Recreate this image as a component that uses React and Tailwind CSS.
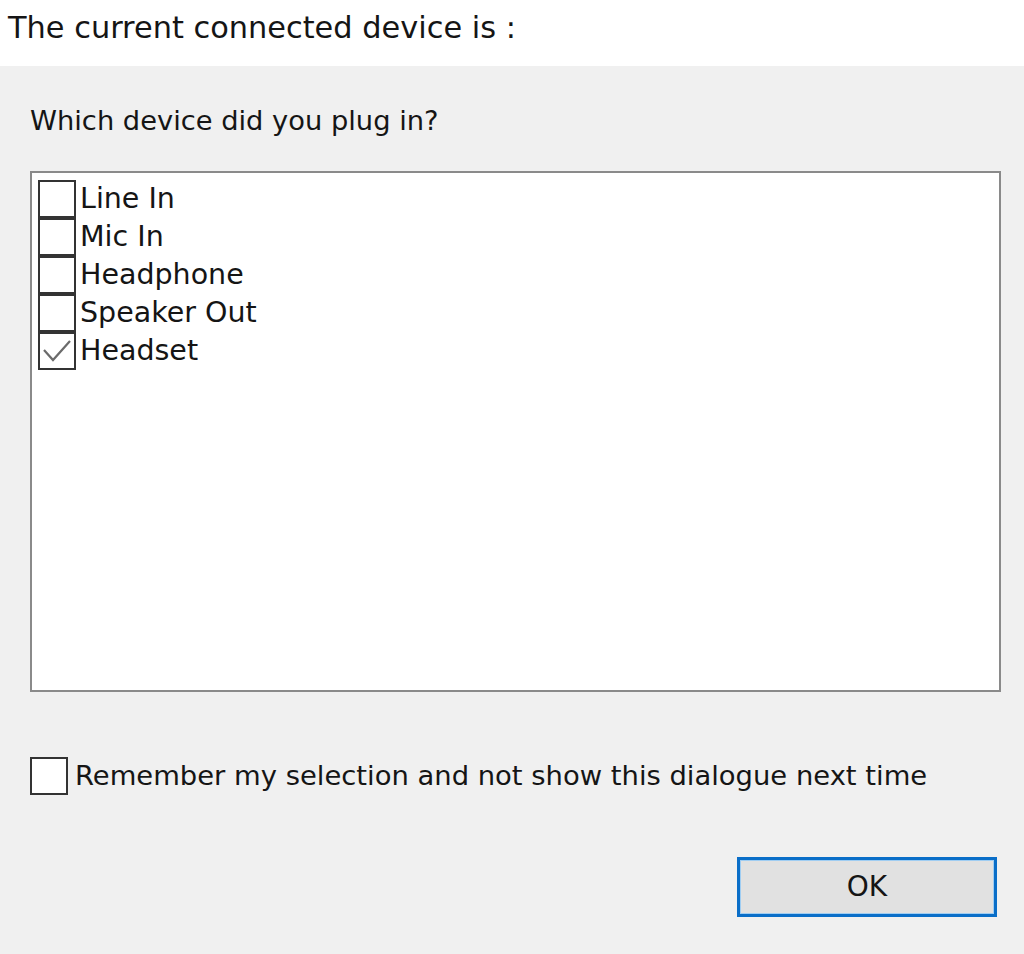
import React from 'react';

const devices = [
    { label: 'Line In', checked: false },
    { label: 'Mic In', checked: false },
    { label: 'Headphone', checked: false },
    { label: 'Speaker Out', checked: false },
    { label: 'Headset', checked: true },
];

const Box = ({ checked }) => (
    <div className="w-[38px] h-[38px] shrink-0 border-2 border-[#333333] bg-white flex items-center justify-center">
        {checked && (
            <svg width="30" height="26" viewBox="0 0 30 26" fill="none">
                <path d="M2 12 L11 22 L28 3" stroke="#6b6b6b" strokeWidth="2.2" />
            </svg>
        )}
    </div>
);

export default function App() {
    return (
        <div className="w-[1024px] h-[954px] bg-[#f0f0f0] flex flex-col text-[#151515] font-['DejaVu_Sans',sans-serif] overflow-hidden">
            {/* header strip */}
            <div className="h-[66px] bg-white pl-[8px] pt-[9px] text-[30.4px] leading-[38px] shrink-0">
                The current connected device is :
            </div>

            <div className="flex flex-col pl-[30px] pr-[23px]">
                <div className="mt-[36px] text-[27.3px] leading-[38px]">Which device did you plug in?</div>

                <div className="mt-[31px] h-[521px] border-2 border-[#8a8a8a] bg-white pl-[6px] pt-[7px] flex flex-col">
                    {devices.map((d) => (
                        <div key={d.label} className="flex items-center h-[38px]">
                            <Box checked={d.checked} />
                            <span className="ml-[4px] text-[28.5px] leading-[38px]">{d.label}</span>
                        </div>
                    ))}
                </div>

                <div className="mt-[65px] flex items-center">
                    <Box checked={false} />
                    <span className="ml-[7px] text-[27.4px] leading-[38px]">Remember my selection and not show this dialogue next time</span>
                </div>

                <div className="mt-[62px] flex justify-end pr-[4px]">
                    <button className="w-[260px] h-[60px] border-[3px] border-[#0a6ec8] bg-[#e1e1e1] shadow-[inset_0_0_0_1px_#9fcdf2] text-[28px] leading-none">
                        OK
                    </button>
                </div>
            </div>
        </div>
    );
}
